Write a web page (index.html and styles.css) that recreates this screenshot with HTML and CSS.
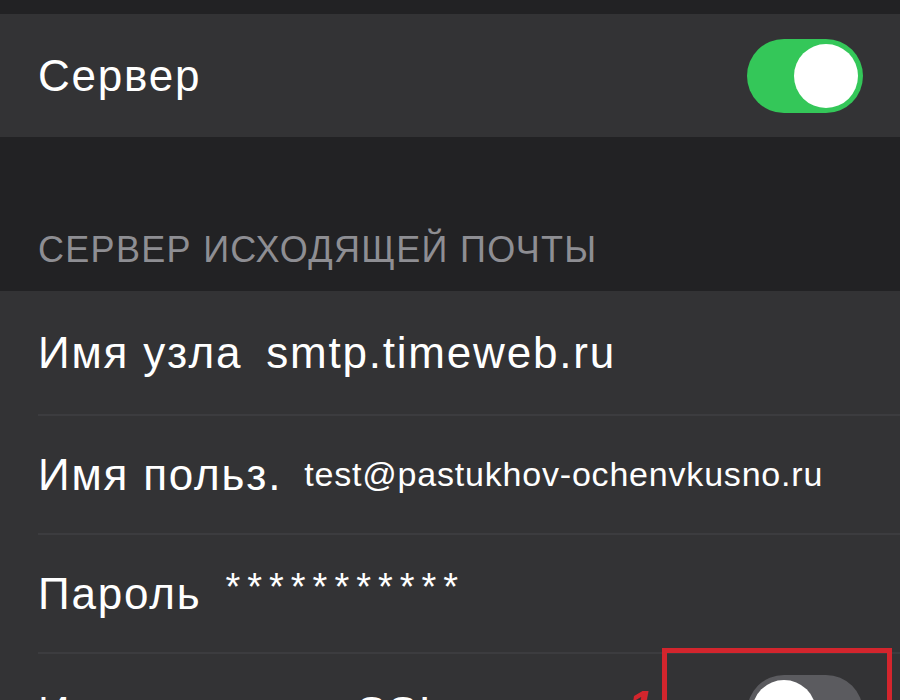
FILE: index.html
```html
<!DOCTYPE html>
<html lang="ru">
<head>
  <meta charset="UTF-8">
  <title>Учетная запись</title>
  <link rel="stylesheet" href="styles.css">
</head>
<body>
  <div class="screen">
    <div class="group">
      <div class="row">
        <span class="label">Сервер</span>
        <span class="switch on"><span class="knob"></span></span>
      </div>
    </div>

    <div class="section-title">СЕРВЕР ИСХОДЯЩЕЙ ПОЧТЫ</div>

    <div class="group">
      <div class="row">
        <span class="label">Имя узла</span>
        <span class="value">smtp.timeweb.ru</span>
      </div>
      <div class="row">
        <span class="label">Имя польз.</span>
        <span class="value small">test@pastukhov-ochenvkusno.ru</span>
      </div>
      <div class="row">
        <span class="label">Пароль</span>
        <span class="value stars">***********</span>
      </div>
      <div class="row last">
        <span class="label">Использовать SSL</span>
        <span class="mark-num">1</span>
        <span class="mark-box"></span>
        <span class="switch"><span class="knob"></span></span>
      </div>
    </div>
  </div>
</body>
</html>
```

FILE: styles.css
```css
body {
  margin: 0;
  background-color: #222224;
  font-family: "Liberation Sans", Arial, sans-serif;
  color: #fff;
  overflow: hidden;
}
.screen {
  padding-top: 14px;
}
.group {
  background-color: #333335;
}
.row {
  position: relative;
  box-sizing: border-box;
  display: flex;
  align-items: center;
  height: 119px;
  margin-left: 38px;
  padding-right: 37px;
  border-top: 2px solid #3c3c3f;
}
.row:first-child {
  border-top: none;
  height: 123px;
}
.label {
  font-size: 44px;
  letter-spacing: 1.8px;
}
.value {
  font-size: 44px;
  margin-left: 24px;
  letter-spacing: 1.8px;
}
.value.small {
  font-size: 34px;
  margin-left: 22px;
  letter-spacing: 0.8px;
}
.value.stars {
  font-size: 38px;
  letter-spacing: 7px;
  margin-left: 24px;
  position: relative;
  top: -6px;
}
.row.last {
  align-items: flex-start;
  padding-top: 34px;
  height: 110px;
}
.section-title {
  height: 154px;
  box-sizing: border-box;
  padding: 92px 0 0 38px;
  font-size: 36px;
  color: #8e8e93;
  letter-spacing: 1.3px;
}
.switch {
  position: relative;
  margin-left: auto;
  width: 116px;
  height: 74px;
  border-radius: 37px;
  background-color: #5b5b5f;
  flex-shrink: 0;
}
.row.last .switch {
  margin-top: -13px;
}
.switch.on {
  background-color: #34c759;
}
.knob {
  position: absolute;
  top: 5px;
  left: 5px;
  width: 64px;
  height: 64px;
  border-radius: 50%;
  background-color: #fff;
}
.switch.on .knob {
  left: 47px;
}
.mark-box {
  position: absolute;
  left: 624px;
  top: -6px;
  width: 220px;
  height: 120px;
  border: 5px solid #d3252d;
}
.mark-num {
  position: absolute;
  left: 590px;
  top: 28px;
  font-size: 44px;
  font-style: italic;
  font-weight: bold;
  color: #d3252d;
}
```
